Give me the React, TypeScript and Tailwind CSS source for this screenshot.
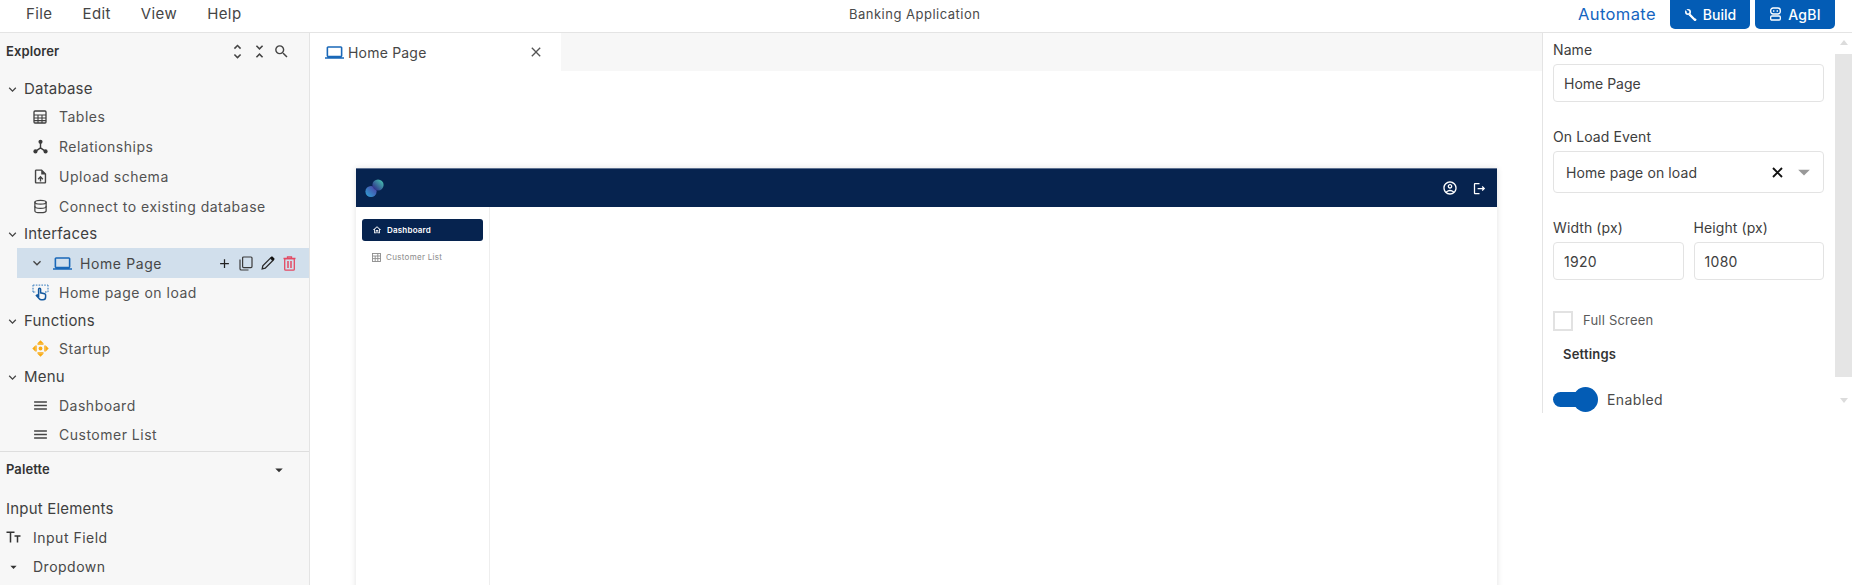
import React from "react";
import {
  MdKeyboardArrowDown, MdOutlineUploadFile, MdAdd, MdArrowDropDown, MdUnfoldMore, MdUnfoldLess,
  MdSearch, MdOutlineAccountCircle, MdOutlineLogout, MdOutlineHome, MdClose, MdOutlineLaptop, MdMenu,
} from "react-icons/md";
import { LuDatabase } from "react-icons/lu";

function Relations() {
  return (
    <svg width="15" height="15" viewBox="0 0 16 16" fill="#3a3a3a" stroke="#3a3a3a">
      <circle cx="8" cy="3" r="2.2" stroke="none" />
      <circle cx="2.6" cy="13.2" r="2.2" stroke="none" />
      <circle cx="13.4" cy="13.2" r="2.2" stroke="none" />
      <path d="M8 4v5.5M8 9.5l-5 3.5M8 9.5l5 3.5" strokeWidth="1.5" fill="none" />
    </svg>
  );
}

function TableIcon() {
  return (
    <svg width="14" height="14" viewBox="0 0 14 14" fill="none" stroke="#3f3f3f" strokeWidth="1.3">
      <rect x="1" y="1" width="12" height="12" rx="1" />
      <path d="M1 5h12M1 8h12M1 10.6h12M5 5v8M9 5v8" strokeWidth="1.1" />
    </svg>
  );
}

function TouchIcon() {
  return (
    <svg width="17" height="17" viewBox="0 0 17 17" fill="none">
      <path d="M1 1.2h15M1 8h3M13 8h3M1 1v7M16 1v7" stroke="#5b93c9" strokeWidth="1.3" strokeDasharray="1.6 1.2" />
      <path
        d="M6.6 5.2a1 1 0 0 1 2 0v3.6l4 1a1.3 1.3 0 0 1 1 1.3v1.8c0 1.6-1 2.8-2.6 2.8H9.2c-.8 0-1.4-.3-1.9-.9L4.4 11.6l.8-.7 1.4 1z"
        fill="none"
        stroke="#14599f"
        strokeWidth="1.5"
      />
    </svg>
  );
}

function StartupIcon() {
  return (
    <svg width="17" height="17" viewBox="0 0 17 17" fill="#f9ab13">
      <path d="M8.5 .3l3 3H5.5zM8.5 16.7l3-3H5.5zM.3 8.5l3-3v6zM16.7 8.5l-3-3v6z" />
      <path d="M5.5 3.3h6v1.4h-6zM5.5 12.3h6v1.4h-6zM3.3 5.5h1.4v6H3.3zM12.3 5.5h1.4v6h-1.4z" />
      <circle cx="8.5" cy="8.5" r="1.9" />
    </svg>
  );
}

function CopyIcon() {
  return (
    <svg width="14" height="15" viewBox="0 0 14 15" fill="none" stroke="#3a3a3a" strokeWidth="1.2">
      <path d="M1 3.5v9.2c0 .8.5 1.3 1.3 1.3h7.2" />
      <rect x="3.6" y="1" width="9.4" height="10.6" rx="1" />
    </svg>
  );
}

function PencilIcon() {
  return (
    <svg width="14" height="14" viewBox="0 0 14 14">
      <path d="M1.2 12.8l.6-3L9.5 2.1l2.4 2.4-7.7 7.7z" fill="none" stroke="#2a2a2a" strokeWidth="1.3" />
      <path d="M9.2 1.8l1.2-1.2c.3-.3.7-.3 1 0l2 2c.3.3.3.7 0 1l-1.2 1.2z" fill="#111" />
    </svg>
  );
}

function TrashIcon() {
  return (
    <svg width="13" height="15" viewBox="0 0 13 15" fill="none" stroke="#e34a63" strokeWidth="1.3">
      <path d="M.5 2.5h12M4.5 2.2V.8h4v1.4" />
      <rect x="1.7" y="2.6" width="9.6" height="11.6" rx="1" />
      <path d="M5 5v7M8 5v7" strokeWidth="1.5" />
    </svg>
  );
}

function WrenchIcon() {
  return (
    <svg width="13" height="13" viewBox="0 0 13 13" fill="none" stroke="#fff">
      <path d="M12 11l-1 1-5.6-5.6" strokeWidth="2.2" />
      <circle cx="4" cy="4" r="2.2" strokeWidth="1.6" />
      <path d="M1.5 1.2l2.6 2.6" stroke="#035cb5" strokeWidth="1.4" />
    </svg>
  );
}

function Bot() {
  return (
    <svg width="13" height="14" viewBox="0 0 13 14" fill="none" stroke="#fff" strokeWidth="1.3">
      <rect x="1.7" y="1" width="9.6" height="6" rx="2.4" />
      <rect x="1.7" y="9" width="9.6" height="4" rx="1.1" />
      <path d="M4 4h1.4M7.6 4H9" strokeWidth="1.5" />
    </svg>
  );
}

function Tt() {
  return (
    <svg width="15" height="12" viewBox="0 0 15 12" fill="none" stroke="#333" strokeWidth="1.5">
      <path d="M0.5 1.2h8M4.5 1.2V11.5M8.5 5h6M11.5 5v6.5" />
    </svg>
  );
}

function GridSmall() {
  return (
    <svg width="9" height="9" viewBox="0 0 9 9" fill="none" stroke="#8c8c8c" strokeWidth="0.9">
      <rect x=".5" y=".5" width="8" height="8" />
      <path d="M.5 3h8M.5 5.6h8M3.2 3v5.5M5.8 .5v8" />
    </svg>
  );
}

function BoldX() {
  return (
    <svg width="11" height="11" viewBox="0 0 11 11" fill="none" stroke="#111" strokeWidth="1.9">
      <path d="M1 1l9 9M10 1l-9 9" />
    </svg>
  );
}

function Logo() {
  return (
    <svg width="19" height="19" viewBox="0 0 19 19">
      <defs>
        <linearGradient id="lg1" x1="0" y1="1" x2="1" y2="0">
          <stop offset="0" stopColor="#2ea6d8" />
          <stop offset="1" stopColor="#4d3aa0" />
        </linearGradient>
        <linearGradient id="lg2" x1="0" y1="1" x2="1" y2="0">
          <stop offset="0" stopColor="#2c1685" />
          <stop offset="1" stopColor="#48d2b4" />
        </linearGradient>
      </defs>
      <circle cx="6" cy="12.5" r="5.6" fill="url(#lg1)" />
      <circle cx="13" cy="6" r="5.6" fill="url(#lg2)" />
    </svg>
  );
}

function Section({ label, h = "h-[28px]" }: { label: string; h?: string }) {
  return (
    <div className={`flex ${h} flex-none items-center pl-[5px] text-[15px] tracking-[0.2px] text-[#3f3f3f]`}>
      <MdKeyboardArrowDown size={15} className="text-[#444]" />
      <span className="ml-[4px]">{label}</span>
    </div>
  );
}

function Item({ icon, label, h = "h-[29.5px]" }: { icon: React.ReactNode; label: string; h?: string }) {
  return (
    <div className={`flex flex-none items-center ${h} pl-[30px] text-[14px] tracking-[0.5px] text-[#525252]`}>
      <span className="flex w-[20px] justify-center">{icon}</span>
      <span className="ml-[9px]">{label}</span>
    </div>
  );
}

function Field({ label, value, className, track = "tracking-[0.3px]" }: { label: string; value: string; className?: string; track?: string }) {
  return (
    <div className={className}>
      <div className="h-[15px] text-[14px] leading-[15px] tracking-[0.1px] text-[#3d3d3d]">{label}</div>
      <div className={`mt-[7px] flex h-[38px] items-center rounded-[4px] border border-[#e3e3e3] pl-[10px] text-[14px] ${track} text-[#404040]`}>
        {value}
      </div>
    </div>
  );
}

export default function App() {
  return (
    <div className="h-[585px] w-[1852px] overflow-hidden bg-white font-['Inter',sans-serif]">
      <header className="relative flex h-[33px] items-center justify-between border-b border-[#e4e4e4] pb-[4px]">
        <nav className="flex gap-[30px] pl-[26px] text-[15px] tracking-[0.4px] text-[#454545]">
          <span>File</span>
          <span>Edit</span>
          <span>View</span>
          <span>Help</span>
        </nav>
        <div className="absolute left-[849px] top-[5px] text-[13px] tracking-[0.5px] text-[#4a4a4a]">Banking Application</div>
        <div className="flex items-center gap-[5px] pr-[17px]">
          <span className="mr-[9px] text-[16.5px] tracking-[0.4px] text-[#1565c0]">Automate</span>
          <button className="flex h-[29px] w-[80px] items-center justify-center gap-[6px] rounded-b-[5px] bg-[#035cb5] text-[14px] font-medium text-white">
            <WrenchIcon /> Build
          </button>
          <button className="flex h-[29px] w-[80px] items-center justify-center gap-[6px] rounded-b-[5px] bg-[#035cb5] text-[14px] font-medium tracking-[0.2px] text-white">
            <Bot /> AgBI
          </button>
        </div>
      </header>

      <div className="flex h-[552px]">
        <aside className="flex w-[310px] flex-none flex-col overflow-hidden border-r border-[#e4e4e4] bg-[#f7f7f7]">
          <div className="flex h-[43px] flex-none items-center justify-between pb-[6px] pl-[6px] pr-[19px]">
            <span className="text-[13px] font-semibold tracking-[0.1px] text-[#333]">Explorer</span>
            <div className="flex items-center gap-[3px] text-[#444]">
              <MdUnfoldMore size={19} />
              <MdUnfoldLess size={19} />
              <MdSearch size={17} className="ml-[1px]" />
            </div>
          </div>
          <Section label="Database" h="h-[26px]" />
          <Item icon={<TableIcon />} label="Tables" />
          <Item h="h-[30px]" icon={<Relations />} label="Relationships" />
          <Item h="h-[30px]" icon={<MdOutlineUploadFile size={17} className="text-[#444]" />} label="Upload schema" />
          <Item icon={<LuDatabase size={15} className="text-[#444]" />} label="Connect to existing database" />
          <Section label="Interfaces" h="h-[27px]" />
          <div className="ml-[17px] flex h-[30px] flex-none items-center bg-[#d1dfec] pl-[12px] pr-[13px] text-[14px] tracking-[0.6px] text-[#474747]">
            <MdKeyboardArrowDown size={16} className="text-[#444]" />
            <MdOutlineLaptop size={19} className="ml-[8px] text-[#1a68b8]" />
            <span className="ml-[8px] flex-1">Home Page</span>
            <MdAdd size={15} className="text-[#222]" />
            <span className="ml-[7px]"><CopyIcon /></span>
            <span className="ml-[8px]"><PencilIcon /></span>
            <span className="ml-[8px]"><TrashIcon /></span>
          </div>
          <Item icon={<TouchIcon />} label="Home page on load" />
          <Section label="Functions" h="h-[27px]" />
          <Item h="h-[28.5px]" icon={<StartupIcon />} label="Startup" />
          <Section label="Menu" />
          <Item h="h-[28.5px]" icon={<MdMenu size={17} className="text-[#444]" />} label="Dashboard" />
          <Item h="h-[29.5px]" icon={<MdMenu size={17} className="text-[#444]" />} label="Customer List" />
          <div className="mt-[1.5px] flex-none border-t border-[#dedede] pl-[6px] pr-[21px]">
            <div className="flex h-[36px] items-center justify-between">
              <span className="text-[13px] font-semibold tracking-[0.1px] text-[#333]">Palette</span>
              <MdArrowDropDown size={18} className="text-[#333]" />
            </div>
            <div className="mt-[8px] flex h-[27px] items-center text-[15px] tracking-[0.2px] text-[#3f3f3f]">Input Elements</div>
            <div className="flex h-[29px] items-center text-[14px] tracking-[0.5px] text-[#474747]">
              <Tt />
              <span className="ml-[12px]">Input Field</span>
            </div>
            <div className="flex h-[30px] items-center text-[14px] tracking-[0.5px] text-[#474747]">
              <MdArrowDropDown size={16} className="w-[15px] text-[#333]" />
              <span className="ml-[12px]">Dropdown</span>
            </div>
          </div>
        </aside>

        <main className="flex min-w-0 flex-1 flex-col overflow-hidden">
          <div className="flex h-[38px] flex-none bg-[#f7f7f7]">
            <div className="flex w-[251px] items-center bg-white pl-[15px] pr-[17px] text-[14px] tracking-[0.2px] text-[#474747]">
              <MdOutlineLaptop size={19} className="text-[#1a68b8]" />
              <span className="ml-[4px] flex-1">Home Page</span>
              <MdClose size={16} className="text-[#555]" />
            </div>
          </div>
          <div className="flex-1 overflow-hidden pl-[46px] pt-[97px]">
            <div className="flex h-[500px] w-[1141px] flex-col shadow-[0_0_6px_rgba(0,0,0,0.12)]">
              <div className="flex h-[39px] flex-none items-center justify-between border-t border-[#5d7090] bg-[#06234f] pl-[9px] pr-[10px]">
                <Logo />
                <div className="flex items-center gap-[14px] text-white">
                  <MdOutlineAccountCircle size={16} />
                  <MdOutlineLogout size={15} />
                </div>
              </div>
              <div className="flex flex-1">
                <div className="w-[134px] border-r border-[#eeeeee] px-[6px] pt-[12px]">
                  <div className="flex h-[22px] items-center rounded-[3px] bg-[#06234f] pl-[10px] text-[8px] font-semibold tracking-[0.2px] text-white">
                    <MdOutlineHome size={10} />
                    <span className="ml-[5px]">Dashboard</span>
                  </div>
                  <div className="mt-[5px] flex h-[22px] items-center pl-[10px] text-[8px] tracking-[0.3px] text-[#8a8a8a]">
                    <GridSmall />
                    <span className="ml-[5px]">Customer List</span>
                  </div>
                </div>
              </div>
            </div>
          </div>
        </main>

        <aside className="flex h-[380px] w-[310px] flex-none border-l border-[#e4e4e4]">
          <div className="w-[281px] flex-none pl-[10px]">
            <Field label="Name" value="Home Page" track="tracking-normal" className="mt-[9px] w-[271px]" />
            <div className="mt-[27px] h-[15px] text-[14px] leading-[15px] tracking-[0.1px] text-[#3d3d3d]">On Load Event</div>
            <div className="mt-[7px] flex h-[42px] w-[271px] items-center rounded-[4px] border border-[#e3e3e3] pl-[12px] pr-[11px] text-[14px] tracking-[0.1px] text-[#404040]">
              <span className="flex-1">Home page on load</span>
              <BoldX />
              <MdArrowDropDown size={28} className="-mr-[6px] ml-[7px] text-[#999]" />
            </div>
            <div className="mt-[27px] flex w-[271px] gap-[10px]">
              <Field label="Width (px)" value="1920" className="flex-1" />
              <Field label="Height (px)" value="1080" className="flex-1" />
            </div>
            <div className="mt-[31px] flex items-center">
              <div className="h-[20px] w-[20px] border-2 border-[#e2e2e2]" />
              <span className="ml-[10px] text-[13px] tracking-[0.2px] text-[#5a5a5a]">Full Screen</span>
            </div>
            <div className="mt-[14px] pl-[10px] text-[13px] font-semibold tracking-[0.2px] text-[#333]">Settings</div>
            <div className="mt-[24px] flex items-center">
              <div className="relative h-[15px] w-[33px] rounded-full bg-[#035cb5]">
                <div className="absolute -top-[5px] left-[20px] h-[25px] w-[25px] rounded-full bg-[#035cb5]" />
              </div>
              <span className="ml-[21px] text-[14px] tracking-[0.4px] text-[#4a4a4a]">Enabled</span>
            </div>
          </div>
          <div className="ml-[11px] flex w-[17px] flex-none flex-col items-center">
            <div className="mt-[7px] h-0 w-0 border-x-[4px] border-b-[5px] border-x-transparent border-b-[#dcdcdc]" />
            <div className="mt-[9px] h-[323px] w-full bg-[#e5e5e5]" />
            <div className="mt-[21px] h-0 w-0 border-x-[4px] border-t-[5px] border-x-transparent border-t-[#dcdcdc]" />
          </div>
        </aside>
      </div>
    </div>
  );
}
